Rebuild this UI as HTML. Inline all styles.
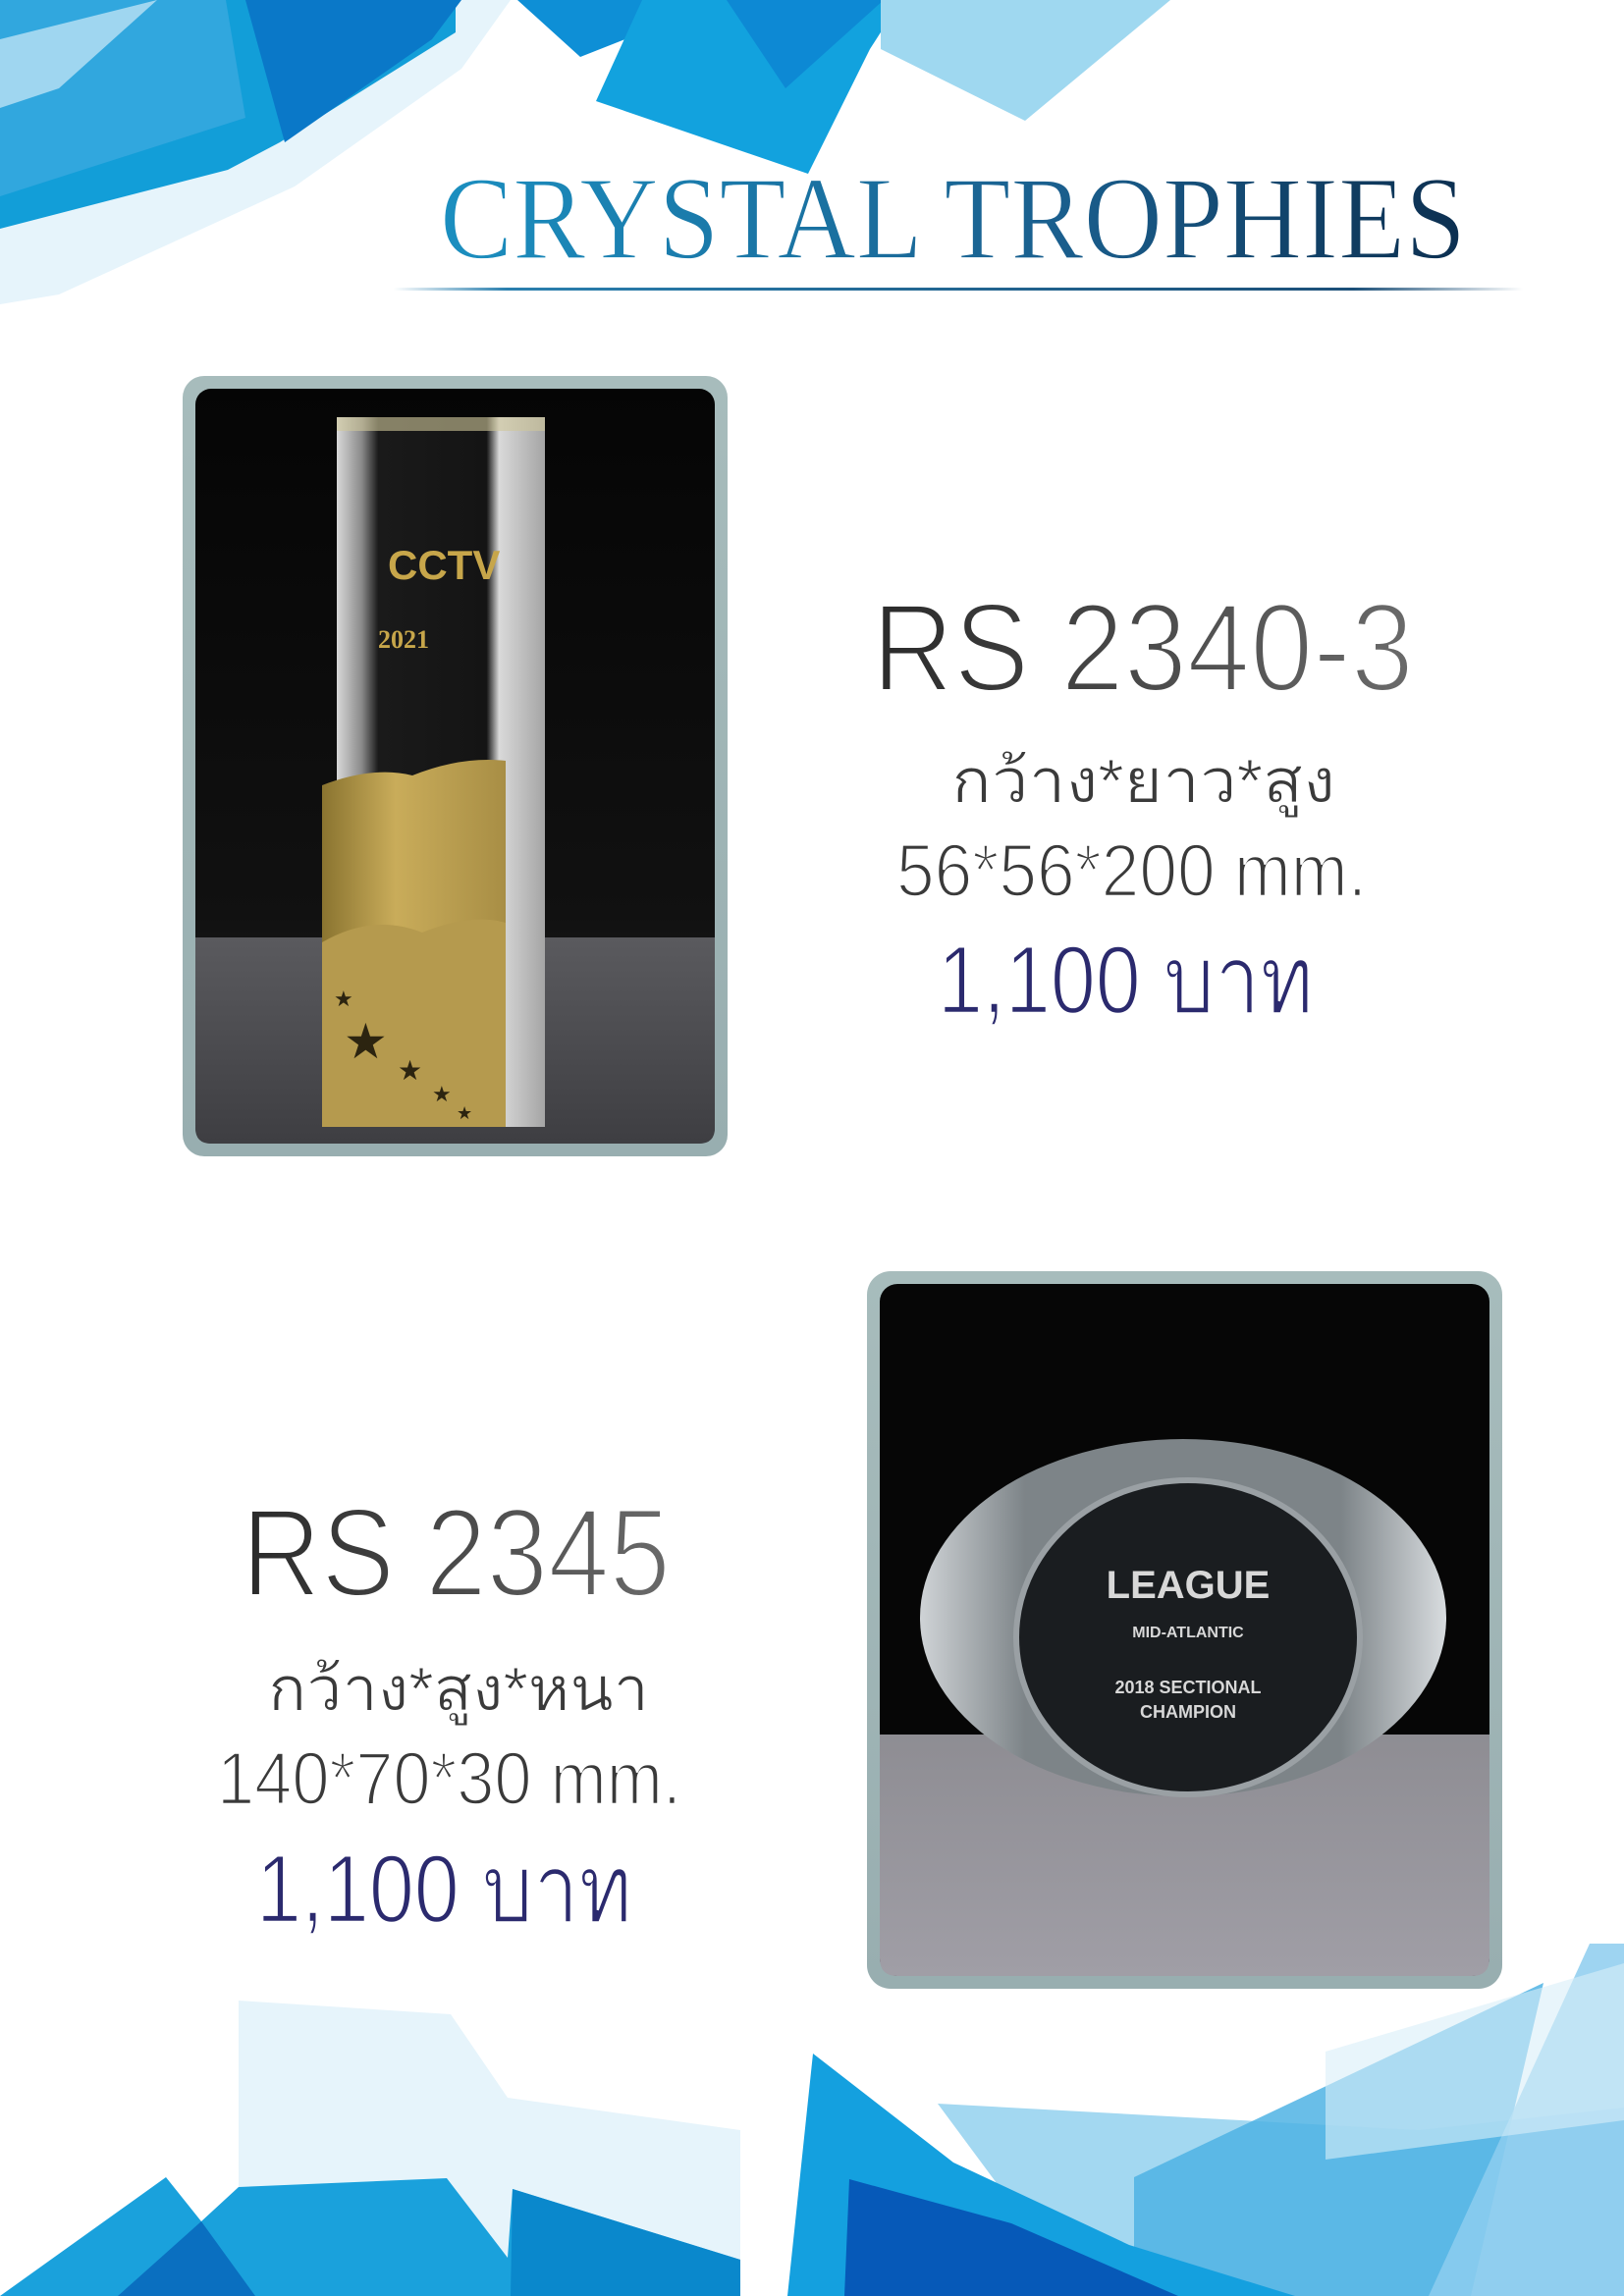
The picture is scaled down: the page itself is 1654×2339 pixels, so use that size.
<!DOCTYPE html>
<html><head><meta charset="utf-8"><style>
html,body{margin:0;padding:0;background:#fff}
body{width:1654px;height:2339px;position:relative;overflow:hidden}
svg{position:absolute;left:0;top:0}
</style></head><body>
<svg width="1654" height="2339" viewBox="0 0 1654 2339" xmlns="http://www.w3.org/2000/svg">
<defs>
<linearGradient id="tg" x1="0" x2="1"><stop offset="0" stop-color="#1b8fc0"/><stop offset="0.6" stop-color="#1a5f8e"/><stop offset="1" stop-color="#0c2f50"/></linearGradient>
<linearGradient id="lg" x1="0" x2="1"><stop offset="0" stop-color="#ffffff"/><stop offset="0.1" stop-color="#2a7fae"/><stop offset="0.85" stop-color="#1b4f78"/><stop offset="1" stop-color="#ffffff"/></linearGradient>
<linearGradient id="gg" x1="0" x2="1"><stop offset="0" stop-color="#2a2a2a"/><stop offset="1" stop-color="#6a6a6a"/></linearGradient>
<linearGradient id="fr" x1="0" x2="0" y1="0" y2="1"><stop offset="0" stop-color="#a7bcbc"/><stop offset="1" stop-color="#98aeb0"/></linearGradient>
<linearGradient id="bk1" x1="0" x2="0" y1="0" y2="1"><stop offset="0" stop-color="#050505"/><stop offset="0.7" stop-color="#111"/><stop offset="1" stop-color="#2a2a2c"/></linearGradient>
<linearGradient id="fl1" x1="0" x2="0" y1="0" y2="1"><stop offset="0" stop-color="#5a5a5e"/><stop offset="1" stop-color="#3e3e42"/></linearGradient>
<linearGradient id="gold" x1="0" x2="1"><stop offset="0" stop-color="#8a7430"/><stop offset="0.4" stop-color="#c9ac5a"/><stop offset="1" stop-color="#a88e45"/></linearGradient>
<linearGradient id="cry" x1="0" x2="1"><stop offset="0" stop-color="#d8d8d8"/><stop offset="0.12" stop-color="#8a8a8a"/><stop offset="0.2" stop-color="#1a1a1a"/><stop offset="0.72" stop-color="#141414"/><stop offset="0.78" stop-color="#d9d9d9"/><stop offset="1" stop-color="#a5a5a5"/></linearGradient>
<linearGradient id="fl2" x1="0" x2="0" y1="0" y2="1"><stop offset="0" stop-color="#8e8d93"/><stop offset="1" stop-color="#a09ea6"/></linearGradient>
<linearGradient id="ov" x1="0" x2="1"><stop offset="0" stop-color="#cfd3d6"/><stop offset="0.2" stop-color="#7d8488"/><stop offset="0.8" stop-color="#7d8488"/><stop offset="1" stop-color="#d8dcdf"/></linearGradient>
</defs>

<polygon points="0,0 520,0 470,70 300,190 60,300 0,310" fill="#e6f4fb"/>
<polygon points="0,0 464,0 464,33 285,145 232,173 0,233" fill="#129ed8"/>
<polygon points="0,0 230,0 250,120 0,200" fill="#3aa9e0" opacity="0.8"/>
<polygon points="250,0 470,0 440,40 290,145" fill="#0a78c8"/>
<polygon points="0,40 160,0 60,90 0,110" fill="#9fd6f0"/>
<polygon points="527,0 738,0 591,58" fill="#0e8fd6"/>
<polygon points="654,0 918,0 886,50 823,177 607,103" fill="#12a2de"/>
<polygon points="740,0 900,0 800,90" fill="#0b7fd0" opacity="0.7"/>
<polygon points="897,0 1192,0 1044,123 897,50" fill="#9fd8f0"/>

<g transform="translate(0,263) scale(1,1.12) translate(0,-263)">
<text x="448" y="263" font-family="Liberation Serif, serif" font-size="108" textLength="1045" lengthAdjust="spacingAndGlyphs" fill="url(#tg)" stroke="#fff" stroke-width="1.5">CRYSTAL TROPHIES</text>
</g>
<rect x="401" y="293" width="1150" height="3" fill="url(#lg)"/>

<rect x="186" y="383" width="555" height="795" rx="22" fill="url(#fr)"/>
<rect x="199" y="396" width="529" height="769" rx="16" fill="url(#bk1)"/>
<path d="M199 955 L728 955 L728 1149 Q728 1165 712 1165 L215 1165 Q199 1165 199 1149 Z" fill="url(#fl1)"/>
<rect x="343" y="425" width="212" height="723" fill="url(#cry)"/>
<rect x="343" y="425" width="212" height="14" fill="#cfc79a" opacity="0.6"/>
<text x="395" y="590" font-family="Liberation Sans, sans-serif" font-weight="bold" font-size="42" fill="#c7a64a">CCTV</text>
<text x="385" y="660" font-family="Liberation Serif, serif" font-weight="bold" font-size="26" fill="#c7a64a">2021</text>
<path d="M328 800 Q380 780 420 790 Q470 770 515 775 L515 1148 L328 1148 Z" fill="url(#gold)"/>
<path d="M328 960 Q380 930 430 950 Q480 930 515 940 L515 1148 L328 1148 Z" fill="#b59a4e"/>
<g fill="#2c2410">
<text x="340" y="1025" font-size="22">★</text>
<text x="350" y="1078" font-size="50">★</text>
<text x="405" y="1100" font-size="28">★</text>
<text x="440" y="1122" font-size="22">★</text>
<text x="465" y="1140" font-size="18">★</text>
</g>

<g stroke="#fff" stroke-width="2.5">
<text x="888" y="704" font-family="Liberation Sans, sans-serif" font-size="128" textLength="552" lengthAdjust="spacingAndGlyphs" fill="url(#gg)" stroke-width="4">RS 2340-3</text>
<text x="969" y="817" font-family="Liberation Sans, 'Noto Sans CJK SC', sans-serif" font-size="62" textLength="391" lengthAdjust="spacingAndGlyphs" fill="#3a3a3a" stroke-width="1">กว้าง*ยาว*สูง</text>
<text x="913" y="913" font-family="Liberation Sans, sans-serif" font-size="76" textLength="479" lengthAdjust="spacingAndGlyphs" fill="#3a3a3a">56*56*200 mm.</text>
<text x="955" y="1032" font-family="Liberation Sans, 'Noto Sans CJK SC', sans-serif" font-size="98" textLength="383" lengthAdjust="spacingAndGlyphs" fill="#2b2a6e">1,100 บาท</text>
</g>

<rect x="883" y="1295" width="647" height="731" rx="24" fill="url(#fr)"/>
<rect x="896" y="1308" width="621" height="705" rx="18" fill="#060606"/>
<path d="M896 1767 L1517 1767 L1517 1995 Q1517 2013 1499 2013 L914 2013 Q896 2013 896 1995 Z" fill="url(#fl2)"/>
<ellipse cx="1205" cy="1648" rx="268" ry="182" fill="url(#ov)"/>
<ellipse cx="1210" cy="1668" rx="175" ry="160" fill="#1a1d20"/>
<ellipse cx="1210" cy="1668" rx="175" ry="160" fill="none" stroke="#9aa0a4" stroke-width="6"/>
<g font-family="Liberation Sans, sans-serif" font-weight="bold" fill="#d8d8d8" text-anchor="middle">
<text x="1210" y="1628" font-size="40">LEAGUE</text>
<text x="1210" y="1668" font-size="16">MID-ATLANTIC</text>
<text x="1210" y="1725" font-size="18">2018 SECTIONAL</text>
<text x="1210" y="1750" font-size="18">CHAMPION</text>
</g>

<g stroke="#fff" stroke-width="2.5">
<text x="246" y="1626" font-family="Liberation Sans, sans-serif" font-size="128" textLength="437" lengthAdjust="spacingAndGlyphs" fill="url(#gg)" stroke-width="4">RS 2345</text>
<text x="273" y="1742" font-family="Liberation Sans, 'Noto Sans CJK SC', sans-serif" font-size="62" textLength="388" lengthAdjust="spacingAndGlyphs" fill="#3a3a3a" stroke-width="1">กว้าง*สูง*หนา</text>
<text x="221" y="1838" font-family="Liberation Sans, sans-serif" font-size="76" textLength="473" lengthAdjust="spacingAndGlyphs" fill="#3a3a3a">140*70*30 mm.</text>
<text x="261" y="1958" font-family="Liberation Sans, 'Noto Sans CJK SC', sans-serif" font-size="98" textLength="383" lengthAdjust="spacingAndGlyphs" fill="#2b2a6e">1,100 บาท</text>
</g>

<polygon points="243,2038 459,2052 517,2137 754,2170 754,2339 243,2339" fill="#e6f4fb"/>
<polygon points="0,2339 169,2218 205,2263 243,2228 455,2219 517,2300 522,2230 754,2302 754,2339" fill="#1aa1dc"/>
<polygon points="120,2339 205,2263 260,2339" fill="#0a6fc0"/>
<polygon points="522,2230 754,2302 754,2339 520,2339" fill="#0a88cc"/>
<polygon points="955,2143 1445,2170 1654,2147 1654,2339 1100,2339" fill="#a3d8f1"/>
<polygon points="1155,2218 1572,2020 1498,2339 1155,2339" fill="#4fb3e4" opacity="0.85"/>
<polygon points="828,2092 971,2203 1150,2287 1319,2339 802,2339" fill="#14a0df"/>
<polygon points="865,2220 1030,2265 1200,2339 860,2339" fill="#0659b8"/>
<polygon points="1619,1980 1654,1980 1654,2339 1455,2339" fill="#8dcdee" opacity="0.85"/>
<polygon points="1350,2090 1654,2000 1654,2160 1350,2200" fill="#d8eef9" opacity="0.6"/>
</svg>
</body></html>
